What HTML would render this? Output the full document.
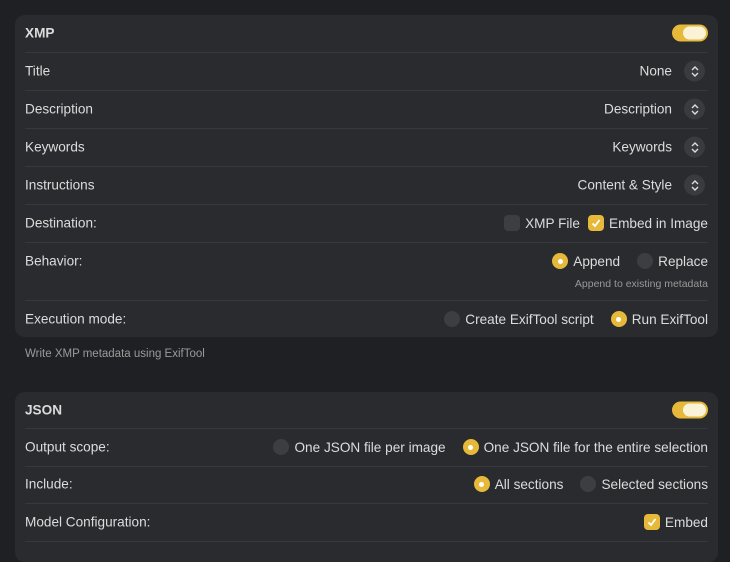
<html><head><style>
body{margin:0;width:730px;height:548px;background:#1f2023;font-family:"Liberation Sans",sans-serif;color:#dcdcdc;position:relative;overflow:hidden;font-size:13.6px}
.card{position:absolute;left:15px;width:703px;background:#2a2b2e;border-radius:10px}
.sep{position:absolute;left:10px;right:10px;height:1px;background:#38393c}
.l{position:absolute;left:10px;transform:translateY(-50%)}
.r{position:absolute;right:10px;transform:translateY(-50%);display:flex;align-items:center;gap:5px;white-space:nowrap}
.h{font-weight:bold;font-size:13.6px}
.tog{position:absolute;right:10px;width:36px;height:17px;border-radius:9px;background:#e6b93a;transform:translateY(-50%)}
.tog:after{content:"";position:absolute;right:2px;top:2px;width:23px;height:13px;border-radius:7px;background:#fbf3d8}
.st{width:21px;height:21px;border-radius:50%;background:#3a3b3e;display:inline-flex;align-items:center;justify-content:center;margin-left:7px;margin-right:3px}
.rad{width:16px;height:16px;border-radius:50%;background:#3d3e41;display:inline-block}
.rad.on{background:#e6b93a;position:relative}
.rad.on:after{content:"";position:absolute;left:5.5px;top:5.5px;width:5px;height:5px;border-radius:50%;background:#fff}
.cb{width:16px;height:16px;border-radius:4px;background:#3d3e41;display:inline-flex;align-items:center;justify-content:center}
.cb.on{background:#e6b93a}
.g{margin-left:12px}
</style></head><body>
<div class="card" style="top:15px;height:322px">
 <div class="l h" style="top:18px">XMP</div><div class="tog" style="top:18px"></div>
 <div class="sep" style="top:37px"></div>
 <div class="l" style="top:56px">Title</div><div class="r" style="top:56px">None<span class="st"><svg width="10" height="12"><path d="M2 4.5L5 1.5L8 4.5M2 7.5L5 10.5L8 7.5" stroke="#ddd" stroke-width="1.4" fill="none"/></svg></span></div>
 <div class="sep" style="top:75px"></div>
 <div class="l" style="top:94px">Description</div><div class="r" style="top:94px">Description<span class="st"><svg width="10" height="12"><path d="M2 4.5L5 1.5L8 4.5M2 7.5L5 10.5L8 7.5" stroke="#ddd" stroke-width="1.4" fill="none"/></svg></span></div>
 <div class="sep" style="top:113px"></div>
 <div class="l" style="top:132px">Keywords</div><div class="r" style="top:132px">Keywords<span class="st"><svg width="10" height="12"><path d="M2 4.5L5 1.5L8 4.5M2 7.5L5 10.5L8 7.5" stroke="#ddd" stroke-width="1.4" fill="none"/></svg></span></div>
 <div class="sep" style="top:151px"></div>
 <div class="l" style="top:170px">Instructions</div><div class="r" style="top:170px">Content &amp; Style<span class="st"><svg width="10" height="12"><path d="M2 4.5L5 1.5L8 4.5M2 7.5L5 10.5L8 7.5" stroke="#ddd" stroke-width="1.4" fill="none"/></svg></span></div>
 <div class="sep" style="top:189px"></div>
 <div class="l" style="top:208px">Destination:</div><div class="r" style="top:208px"><span class="cb"></span>XMP File<span class="cb on" style="margin-left:3px"><svg width="12" height="12"><path d="M2.5 6.5L5 9L9.5 3" stroke="#fff" stroke-width="1.8" fill="none"/></svg></span>Embed in Image</div>
 <div class="sep" style="top:227px"></div>
 <div class="l" style="top:246px">Behavior:</div><div class="r" style="top:246px"><span class="rad on"></span>Append<span class="rad g"></span>Replace</div>
 <div class="r" style="top:269px;font-size:10.5px;color:#999">Append to existing metadata</div>
 <div class="sep" style="top:285px"></div>
 <div class="l" style="top:304px">Execution mode:</div><div class="r" style="top:304px"><span class="rad"></span>Create ExifTool script<span class="rad on g"></span>Run ExifTool</div>
</div>
<div style="position:absolute;left:25px;top:348px;font-size:11.5px;color:#9a9a9a">Write XMP metadata using ExifTool</div>
<div class="card" style="top:392px;height:170px">
 <div class="l h" style="top:18px">JSON</div><div class="tog" style="top:18px"></div>
 <div class="sep" style="top:36px"></div>
 <div class="l" style="top:55px">Output scope:</div><div class="r" style="top:55px"><span class="rad"></span>One JSON file per image<span class="rad on g"></span>One JSON file for the entire selection</div>
 <div class="sep" style="top:74px"></div>
 <div class="l" style="top:92px">Include:</div><div class="r" style="top:92px"><span class="rad on"></span>All sections<span class="rad g"></span>Selected sections</div>
 <div class="sep" style="top:111px"></div>
 <div class="l" style="top:130px">Model Configuration:</div><div class="r" style="top:130px"><span class="cb on"><svg width="12" height="12"><path d="M2.5 6.5L5 9L9.5 3" stroke="#fff" stroke-width="1.8" fill="none"/></svg></span>Embed</div>
 <div class="sep" style="top:149px"></div>
</div>
</body></html>
